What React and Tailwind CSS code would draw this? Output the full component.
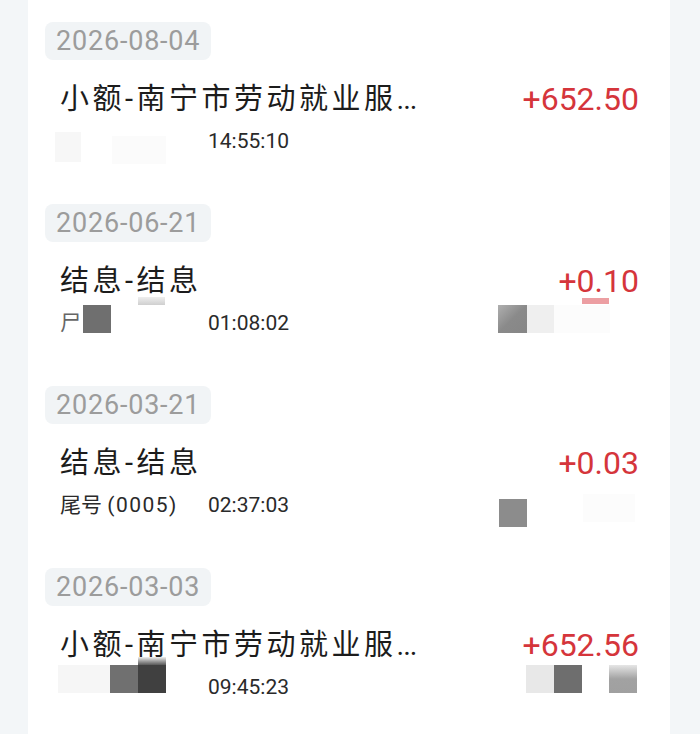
const font = { fontFamily: "Roboto, 'Noto Sans CJK SC', sans-serif" }

const records = [
  {
    date: '2026-08-04',
    title: '小额-南宁市劳动就业服',
    more: true,
    amount: '+652.50',
    time: '14:55:10',
    blocks: [
      { l: 27, t: 132, w: 26, h: 30, c: 'bg-[#f7f7f7]' },
      { l: 84, t: 136, w: 54, h: 28, c: 'bg-[#fbfbfb]' },
    ],
  },
  {
    date: '2026-06-21',
    title: '结息-结息',
    amount: '+0.10',
    time: '01:08:02',
    cut: true,
    blocks: [
      { l: 55, t: 123, w: 28, h: 28, c: 'bg-[#6f6f6f]' },
      { l: 110, t: 115, w: 27, h: 8, c: 'bg-gradient-to-b from-[#eeeeee] to-[#cfcfcf]' },
      { l: 470, t: 123, w: 29, h: 28, c: 'bg-gradient-to-br from-[#b0b0b0] via-[#8a8a8a] to-[#868686]' },
      { l: 499, t: 123, w: 27, h: 28, c: 'bg-[#efefef]' },
      { l: 526, t: 123, w: 56, h: 28, c: 'bg-[#fcfcfc]' },
      { l: 554, t: 116, w: 27, h: 6, c: 'bg-[#ec9ea2]' },
    ],
  },
  {
    date: '2026-03-21',
    title: '结息-结息',
    amount: '+0.03',
    label: true,
    time: '02:37:03',
    blocks: [
      { l: 471, t: 135, w: 28, h: 28, c: 'bg-[#8c8c8c]' },
      { l: 555, t: 130, w: 52, h: 28, c: 'bg-[#fcfcfc]' },
    ],
  },
  {
    date: '2026-03-03',
    title: '小额-南宁市劳动就业服',
    more: true,
    amount: '+652.56',
    time: '09:45:23',
    blocks: [
      { l: 30, t: 119, w: 52, h: 28, c: 'bg-[#f6f6f6]' },
      { l: 82, t: 119, w: 28, h: 28, c: 'bg-[#707070]' },
      { l: 110, t: 119, w: 28, h: 28, c: 'bg-[#404040]' },
      { l: 110, t: 111, w: 28, h: 8, c: 'bg-gradient-to-b from-[#f0f0f0] to-[#5a5a5a]' },
      { l: 498, t: 119, w: 28, h: 28, c: 'bg-[#e8e8e8]' },
      { l: 526, t: 119, w: 28, h: 28, c: 'bg-[#6e6e6e]' },
      { l: 581, t: 119, w: 28, h: 28, c: 'bg-gradient-to-b from-[#e6e6e6] via-[#a2a2a2] to-[#a0a0a0]' },
    ],
  },
]

function Record({ r }) {
  return (
    <div className="relative h-[182px] pt-[22px]">
      <div className="ml-[17px] inline-flex h-[38px] items-center rounded-lg bg-[#f1f4f6] px-[11px]">
        <span className="text-[27px] leading-none tracking-[0.8px] text-[#9c9c9c]">{r.date}</span>
      </div>
      <div className="mt-[19px] flex h-[40px] items-center justify-between pl-[32px] pr-[31px]">
        <span className="text-[29px] leading-none text-[#1c1c1c]">
          <span className="tracking-[3.5px]">{r.title}</span>
          {r.more && <span className="tracking-[-1px]">...</span>}
        </span>
        <span className="text-[32px] leading-none text-[#d5353b]">{r.amount}</span>
      </div>
      <div className="mt-[7px] flex h-[30px] items-center pl-[32px]">
        <span className="w-[148px] text-[21px] leading-none text-[#2a2a2a]">
          {r.cut && <span className="text-[#666]">尸</span>}
          {r.label && (
            <>
              尾号 <span className="tracking-[1.5px]">(0005)</span>
            </>
          )}
        </span>
        <span className="text-[21px] leading-none text-[#2a2a2a]">{r.time}</span>
      </div>
      {r.blocks.map((b, i) => (
        <div
          key={i}
          className={`absolute ${b.c}`}
          style={{ left: b.l, top: b.t, width: b.w, height: b.h }}
        />
      ))}
    </div>
  )
}

export default function App() {
  return (
    <div className="flex h-[734px] w-[700px] bg-[#f3f6f8]" style={font}>
      <div className="ml-[28px] h-full w-[642px] overflow-hidden bg-white">
        {records.map((r) => (
          <Record key={r.date} r={r} />
        ))}
      </div>
    </div>
  )
}
